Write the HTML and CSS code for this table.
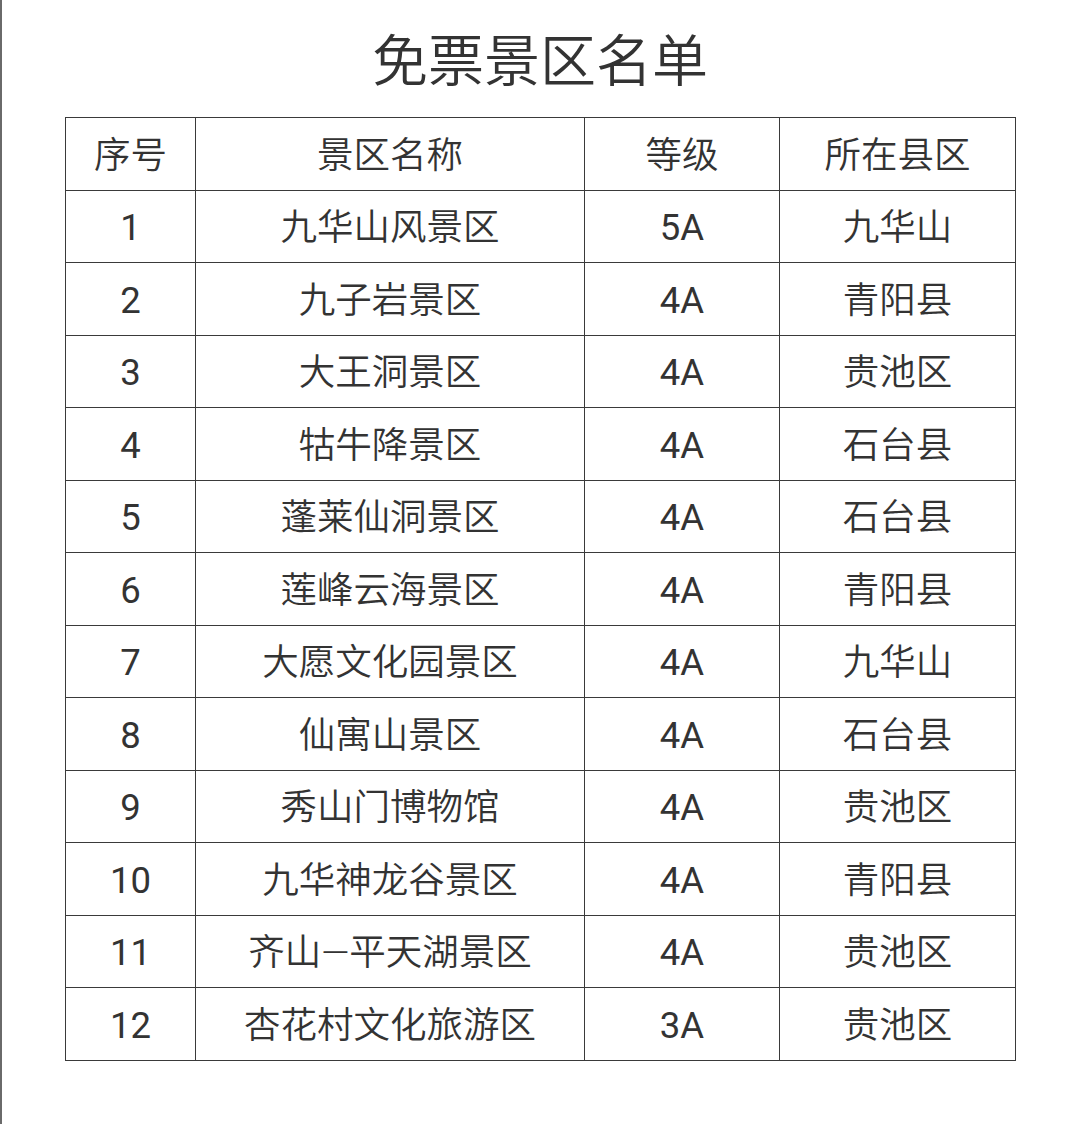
FILE: index.html
```html
<!DOCTYPE html>
<html lang="zh">
<head>
<meta charset="utf-8">
<title>免票景区名单</title>
<link rel="stylesheet" href="styles.css">
</head>
<body>
<div class="page">
  <h1 class="title">免票景区名单</h1>
  <table class="list">
    <colgroup>
      <col class="c1"><col class="c2"><col class="c3"><col class="c4">
    </colgroup>
    <thead>
      <tr><th>序号</th><th>景区名称</th><th>等级</th><th>所在县区</th></tr>
    </thead>
    <tbody>
      <tr><td>1</td><td>九华山风景区</td><td>5A</td><td>九华山</td></tr>
      <tr><td>2</td><td>九子岩景区</td><td>4A</td><td>青阳县</td></tr>
      <tr><td>3</td><td>大王洞景区</td><td>4A</td><td>贵池区</td></tr>
      <tr><td>4</td><td>牯牛降景区</td><td>4A</td><td>石台县</td></tr>
      <tr><td>5</td><td>蓬莱仙洞景区</td><td>4A</td><td>石台县</td></tr>
      <tr><td>6</td><td>莲峰云海景区</td><td>4A</td><td>青阳县</td></tr>
      <tr><td>7</td><td>大愿文化园景区</td><td>4A</td><td>九华山</td></tr>
      <tr><td>8</td><td>仙寓山景区</td><td>4A</td><td>石台县</td></tr>
      <tr><td>9</td><td>秀山门博物馆</td><td>4A</td><td>贵池区</td></tr>
      <tr><td>10</td><td>九华神龙谷景区</td><td>4A</td><td>青阳县</td></tr>
      <tr><td>11</td><td>齐山—平天湖景区</td><td>4A</td><td>贵池区</td></tr>
      <tr><td>12</td><td>杏花村文化旅游区</td><td>3A</td><td>贵池区</td></tr>
    </tbody>
  </table>
</div>
</body>
</html>
```
FILE: styles.css
```css
html, body {
  margin: 0;
  padding: 0;
  background: #fff;
}
.page {
  box-sizing: border-box;
  width: 1080px;
  height: 1124px;
  border-left: 2px solid #6a6a6a;
  padding: 0 0 0 63px;
  font-family: Roboto, "Noto Sans CJK SC", sans-serif;
  color: #333;
}
.title {
  margin: 0;
  width: 950px;
  height: 117px;
  box-sizing: border-box;
  padding-top: 19px;
  text-align: center;
  font-family: "Noto Sans CJK SC", sans-serif;
  font-weight: 350;
  font-size: 56px;
  line-height: 76px;
  color: #333;
}
.list {
  border-collapse: collapse;
  width: 950px;
  table-layout: fixed;
}
.c1 { width: 130px; }
.c2 { width: 389px; }
.c3 { width: 195px; }
.c4 { width: 236px; }
.list th, .list td {
  border: 1.5px solid #3a3a3a;
  height: 72.5px;
  padding: 4px 0 0 0;
  box-sizing: border-box;
  text-align: center;
  vertical-align: middle;
  font-weight: 350;
  font-size: 36.5px;
  line-height: 40px;
  color: #333;
}
.list td:nth-child(1),
.list td:nth-child(3) {
  font-weight: 400;
}
```
